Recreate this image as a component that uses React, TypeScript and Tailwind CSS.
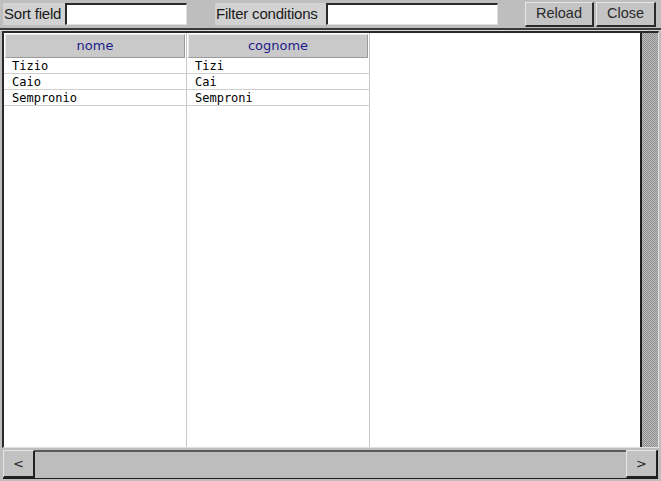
import React from "react";

const rows = [
  ["Tizio", "Tizi"],
  ["Caio", "Cai"],
  ["Sempronio", "Semproni"],
];

export default function App() {
  return (
    <div className="w-[661px] h-[481px] bg-[#bebebe] flex flex-col overflow-hidden font-['Liberation_Sans',Arial,sans-serif]">
      {/* toolbar */}
      <div className="h-[28px] flex items-center pl-[3px] text-[15px] text-[#1a1a1a]">
        <div className="h-[22px] w-[62px] bg-[#d2d2d2] flex items-center pl-[1px] tracking-[-0.2px]">Sort field</div>
        <div className="h-[22px] w-[122px] bg-white border-t-2 border-l-2 border-[#2a2a2a] border-r border-b border-r-[#e0e0e0] border-b-[#e0e0e0]" />
        <div className="w-[28px]" />
        <div className="h-[22px] w-[111px] bg-[#d2d2d2] flex items-center pl-[1px] tracking-[-0.2px]">Filter conditions</div>
        <div className="h-[22px] w-[172px] bg-white border-t-2 border-l-2 border-[#2a2a2a] border-r border-b border-r-[#e0e0e0] border-b-[#e0e0e0]" />
        <div className="w-[27px]" />
        <div className="h-[25px] w-[69px] flex items-center justify-center bg-[#c4c4c4] border-t border-l border-[#e6e6e6] border-r-2 border-b-2 border-r-[#2a2a2a] border-b-[#2a2a2a] text-[14.5px] text-[#2a2a2a]">Reload</div>
        <div className="w-[2px]" />
        <div className="h-[25px] w-[60px] flex items-center justify-center bg-[#c4c4c4] border-t border-l border-[#e6e6e6] border-r-2 border-b-2 border-r-[#2a2a2a] border-b-[#2a2a2a] text-[14.5px] text-[#2a2a2a]">Close</div>
      </div>
      {/* separator */}
      <div className="h-[3px] border-t-2 border-[#3a3a3a] bg-[#d8d8d8]" />
      {/* main */}
      <div className="ml-[2px] mr-[2px] h-[417px] flex border-t-2 border-l-2 border-[#2a2a2a] border-r border-b border-r-[#e0e0e0] border-b-[#e0e0e0]">
        <div className="flex-1 bg-white flex">
          {["nome", "cognome"].map((h, ci) => (
            <div key={h} className="w-[183px] h-full border-r border-[#c8c8c8] flex flex-col">
              <div className="mx-[1px] mt-[1px] h-[24px] bg-[#c9c9c9] border-t border-l border-[#e8e8e8] border-r border-b border-r-[#9a9a9a] border-b-[#9a9a9a] flex items-center justify-center text-[13px] text-[#1c1c8a] font-['DejaVu_Sans',sans-serif]">
                {h}
              </div>
              {rows.map((r) => (
                <div key={r[0]} className="h-[16px] border-b border-[#cfcfcf] pl-[8px] flex items-center text-[12px] leading-none text-black font-['DejaVu_Sans_Mono',monospace]">
                  {r[ci]}
                </div>
              ))}
            </div>
          ))}
        </div>
        <div className="w-[18px] h-full border-l-2 border-[#1e1e1e] bg-[#a8a8a8] bg-[repeating-conic-gradient(#8e8e8e_0_25%,#bcbcbc_0_50%)] bg-[length:2px_2px]" />
      </div>
      {/* horizontal scrollbar */}
      <div className="mt-[2px] ml-[3px] mr-[3px] h-[29px] flex border-r border-b border-[#1e1e1e]">
        <div className="w-[32px] h-full bg-[#c2c2c2] border-t border-l border-[#e6e6e6] border-r-2 border-b-2 border-r-[#222] border-b-[#222] flex items-center justify-center text-[13px] text-[#222] font-['DejaVu_Sans',sans-serif]">&lt;</div>
        <div className="flex-1 h-full bg-[#bdbdbd] border-t-2 border-[#5a5a5a]" />
        <div className="w-[31px] h-full bg-[#c2c2c2] border-t border-l border-[#e6e6e6] border-r border-b-2 border-r-[#222] border-b-[#222] flex items-center justify-center text-[13px] text-[#222] font-['DejaVu_Sans',sans-serif]">&gt;</div>
      </div>
    </div>
  );
}
